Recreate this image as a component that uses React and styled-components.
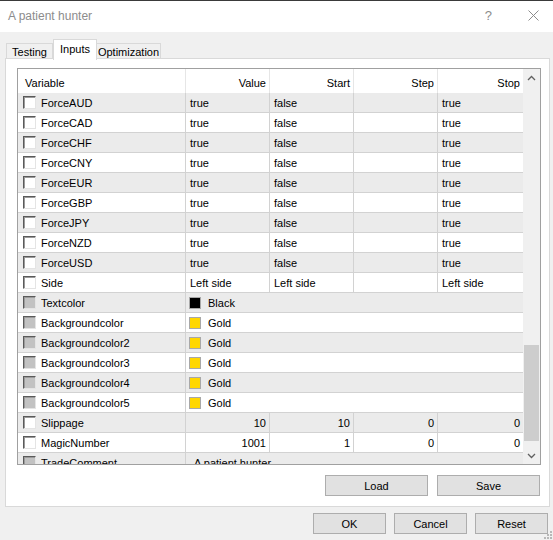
import React from "react";
import styled, { createGlobalStyle } from "styled-components";

const GlobalStyle = createGlobalStyle`
  html, body {
    margin: 0;
    padding: 0;
    background: #f0f0f0;
  }
  body {
    font-family: "Liberation Sans", Arial, sans-serif;
    color: #000;
  }
  * { box-sizing: border-box; }
`;

const GOLD = "#ffd700";

const rows = [
  ...["AUD", "CAD", "CHF", "CNY", "EUR", "GBP", "JPY", "NZD", "USD"].map((c) => ({
    name: "Force" + c,
    value: "true",
    start: "false",
    step: "",
    stop: "true",
  })),
  { name: "Side", value: "Left side", start: "Left side", step: "", stop: "Left side" },
  { name: "Textcolor", color: "#000000", value: "Black" },
  { name: "Backgroundcolor", color: GOLD, value: "Gold" },
  { name: "Backgroundcolor2", color: GOLD, value: "Gold" },
  { name: "Backgroundcolor3", color: GOLD, value: "Gold" },
  { name: "Backgroundcolor4", color: GOLD, value: "Gold" },
  { name: "Backgroundcolor5", color: GOLD, value: "Gold" },
  { name: "Slippage", num: true, value: "10", start: "10", step: "0", stop: "0" },
  { name: "MagicNumber", num: true, value: "1001", start: "1", step: "0", stop: "0" },
  { name: "TradeComment", text: true, value: "A patient hunter" },
];

const Window = styled.div`
  position: relative;
  width: 553px;
  height: 540px;
  display: flex;
  flex-direction: column;
  background: #f0f0f0;
  overflow: hidden;
`;

const TitleBar = styled.div`
  height: 32px;
  flex: none;
  display: flex;
  align-items: center;
  padding: 0 10px 2px 8px;
  background: #fff;
  border-top: 1px solid #3a3a3a;
  color: #8c8c8c;
  font-size: 12px;
`;

const Title = styled.span`
  flex: 1;
`;

const Help = styled.span`
  font-size: 13px;
  margin-right: 31px;
`;

const CloseBox = styled.span`
  width: 20px;
  display: flex;
  justify-content: center;
`;

const TabStrip = styled.div`
  display: flex;
  align-items: flex-end;
  height: 20px;
  margin-top: 7px;
  padding-left: 6px;
  font-size: 11px;
`;

const Tab = styled.div`
  width: ${(p) => p.$w}px;
  height: ${(p) => (p.$active ? 21 : 16)}px;
  display: flex;
  align-items: center;
  justify-content: center;
  padding-bottom: ${(p) => (p.$active ? 3 : 0)}px;
  padding-top: ${(p) => (p.$active ? 0 : 1)}px;
  background: ${(p) => (p.$active ? "#fff" : "#f0f0f0")};
  border: 1px solid #d9d9d9;
  border-bottom: none;
  border-left-width: ${(p) => (p.$noLeft ? 0 : 1)}px;
  position: ${(p) => (p.$active ? "relative" : "static")};
  z-index: ${(p) => (p.$active ? 2 : "auto")};
  margin-bottom: ${(p) => (p.$active ? -1 : 0)}px;
`;

const Panel = styled.div`
  position: relative;
  height: 449px;
  margin: -1px 3px 0 5px;
  padding: 9px 8px 0 11px;
  background: #fff;
  border: 1px solid #d9d9d9;
`;

const Frame = styled.div`
  width: 524px;
  height: 397px;
  display: flex;
  border: 1px solid #a0a0a0;
  overflow: hidden;
  font-size: 11px;
`;

const Grid = styled.div`
  width: 505px;
  height: 395px;
  overflow: hidden;
`;

const Row = styled.div`
  display: grid;
  grid-template-columns: 168px 84px 84px 84px 85px;
  height: ${(p) => (p.$header ? 24 : 20)}px;
  background: ${(p) => (p.$shade ? "#ebebeb" : "#fff")};
  border-bottom: ${(p) => (p.$header ? "none" : "1px solid #d2d2d2")};
`;

const Cell = styled.div`
  display: flex;
  align-items: center;
  justify-content: ${(p) => (p.$right ? "flex-end" : "flex-start")};
  padding: ${(p) => (p.$header ? 3 : 1)}px ${(p) => (p.$right ? 3 : 0)}px 0
    ${(p) => (p.$right ? 0 : 4)}px;
  border-right: ${(p) => (p.$last ? "none" : `1px solid ${p.$header ? "#e6e6e6" : "#d2d2d2"}`)};
  grid-column: ${(p) => (p.$span ? `span ${p.$span}` : "auto")};
  white-space: nowrap;
  overflow: hidden;
`;

const NameCell = styled(Cell)`
  padding-left: 5px;
  padding-top: 0;
`;

const NameText = styled.span`
  padding-top: 1px;
`;

const Check = styled.span`
  width: 13px;
  height: 13px;
  flex: none;
  margin-right: 5px;
  background: ${(p) => (p.$disabled ? "#c2c2c2" : "#fff")};
  border-top: 1px solid #5a5a5a;
  border-left: 1px solid #5a5a5a;
  border-right: 1px solid #e4e4e4;
  border-bottom: 1px solid #e4e4e4;
  box-shadow: inset 1px 1px 0 #9a9a9a;
`;

const Swatch = styled.span`
  width: 12px;
  height: 12px;
  flex: none;
  margin: -1px 7px 0 -1px;
  background: ${(p) => p.$color};
  border: 1px solid #a8a8a8;
`;

const ScrollBar = styled.div`
  width: 17px;
  height: 395px;
  display: flex;
  flex-direction: column;
  background: #f0f0f0;
`;

const ArrowBox = styled.div`
  height: 17px;
  flex: none;
  display: flex;
  align-items: center;
  justify-content: center;
`;

const Track = styled.div`
  flex: 1;
  display: flex;
  flex-direction: column;
  padding: 0 1px;
`;

const Thumb = styled.div`
  margin-top: ${(p) => p.$top}px;
  height: ${(p) => p.$size}px;
  background: #cdcdcd;
`;

const ButtonRow = styled.div`
  display: flex;
  justify-content: flex-end;
  gap: ${(p) => p.$gap}px;
  margin-top: ${(p) => p.$top}px;
  padding-right: ${(p) => p.$right}px;
`;

const Button = styled.button`
  width: ${(p) => p.$w}px;
  height: 21px;
  padding: 0;
  background: #e1e1e1;
  border: 1px solid #adadad;
  border-radius: 0;
  font-family: "Liberation Sans", Arial, sans-serif;
  font-size: 11px;
  color: #000;
`;

const Grip = styled.svg`
  position: absolute;
  right: 1px;
  bottom: 1px;
`;

const Chevron = ({ up }) => (
  <svg width="9" height="6" viewBox="0 0 9 6">
    <path
      d={up ? "M1 5 L4.5 1.5 L8 5" : "M1 1 L4.5 4.5 L8 1"}
      fill="none"
      stroke="#606060"
      strokeWidth="1.3"
    />
  </svg>
);

const ParamRow = ({ row, shade }) => {
  const disabled = !!row.color || !!row.text;
  return (
    <Row $shade={shade}>
      <NameCell>
        <Check $disabled={disabled} />
        <NameText>{row.name}</NameText>
      </NameCell>
      {row.color ? (
        <Cell $span={4} $last>
          <Swatch $color={row.color} />
          {row.value}
        </Cell>
      ) : row.text ? (
        <Cell $span={4} $last style={{ paddingLeft: 8 }}>
          {row.value}
        </Cell>
      ) : (
        <>
          <Cell $right={row.num}>{row.value}</Cell>
          <Cell $right={row.num}>{row.start}</Cell>
          <Cell $right={row.num}>{row.step}</Cell>
          <Cell $right={row.num} $last>
            {row.stop}
          </Cell>
        </>
      )}
    </Row>
  );
};

export default function App() {
  return (
    <Window>
      <GlobalStyle />
      <TitleBar>
        <Title>A patient hunter</Title>
        <Help>?</Help>
        <CloseBox>
          <svg width="11" height="11" viewBox="0 0 11 11">
            <path d="M0.5 0.5 L10.5 10.5 M10.5 0.5 L0.5 10.5" stroke="#8c8c8c" strokeWidth="1" />
          </svg>
        </CloseBox>
      </TitleBar>

      <TabStrip>
        <Tab $w={47}>Testing</Tab>
        <Tab $w={44} $active>
          Inputs
        </Tab>
        <Tab $w={64} $noLeft>
          Optimization
        </Tab>
      </TabStrip>

      <Panel>
        <Frame>
          <Grid>
            <Row $header>
              <Cell $header style={{ paddingLeft: 7 }}>
                Variable
              </Cell>
              <Cell $header $right>Value</Cell>
              <Cell $header $right>Start</Cell>
              <Cell $header $right>Step</Cell>
              <Cell $header $right $last>
                Stop
              </Cell>
            </Row>
            {rows.map((r, i) => (
              <ParamRow key={r.name} row={r} shade={i % 2 === 0} />
            ))}
          </Grid>
          <ScrollBar>
            <ArrowBox>
              <Chevron up />
            </ArrowBox>
            <Track>
              <Thumb $top={259} $size={96} />
            </Track>
            <ArrowBox>
              <Chevron />
            </ArrowBox>
          </ScrollBar>
        </Frame>
        <ButtonRow $gap={9} $top={10} $right={1}>
          <Button $w={103}>Load</Button>
          <Button $w={103}>Save</Button>
        </ButtonRow>
      </Panel>

      <ButtonRow $gap={8} $top={6} $right={5}>
        <Button $w={73}>OK</Button>
        <Button $w={73}>Cancel</Button>
        <Button $w={73}>Reset</Button>
      </ButtonRow>

      <Grip width="8" height="8" viewBox="0 0 8 8">
        {[
          [6, 0],
          [6, 3],
          [3, 3],
          [6, 6],
          [3, 6],
          [0, 6],
        ].map(([x, y]) => (
          <rect key={`${x}-${y}`} x={x} y={y} width="2" height="2" fill="#b8b8b8" />
        ))}
      </Grip>
    </Window>
  );
}
